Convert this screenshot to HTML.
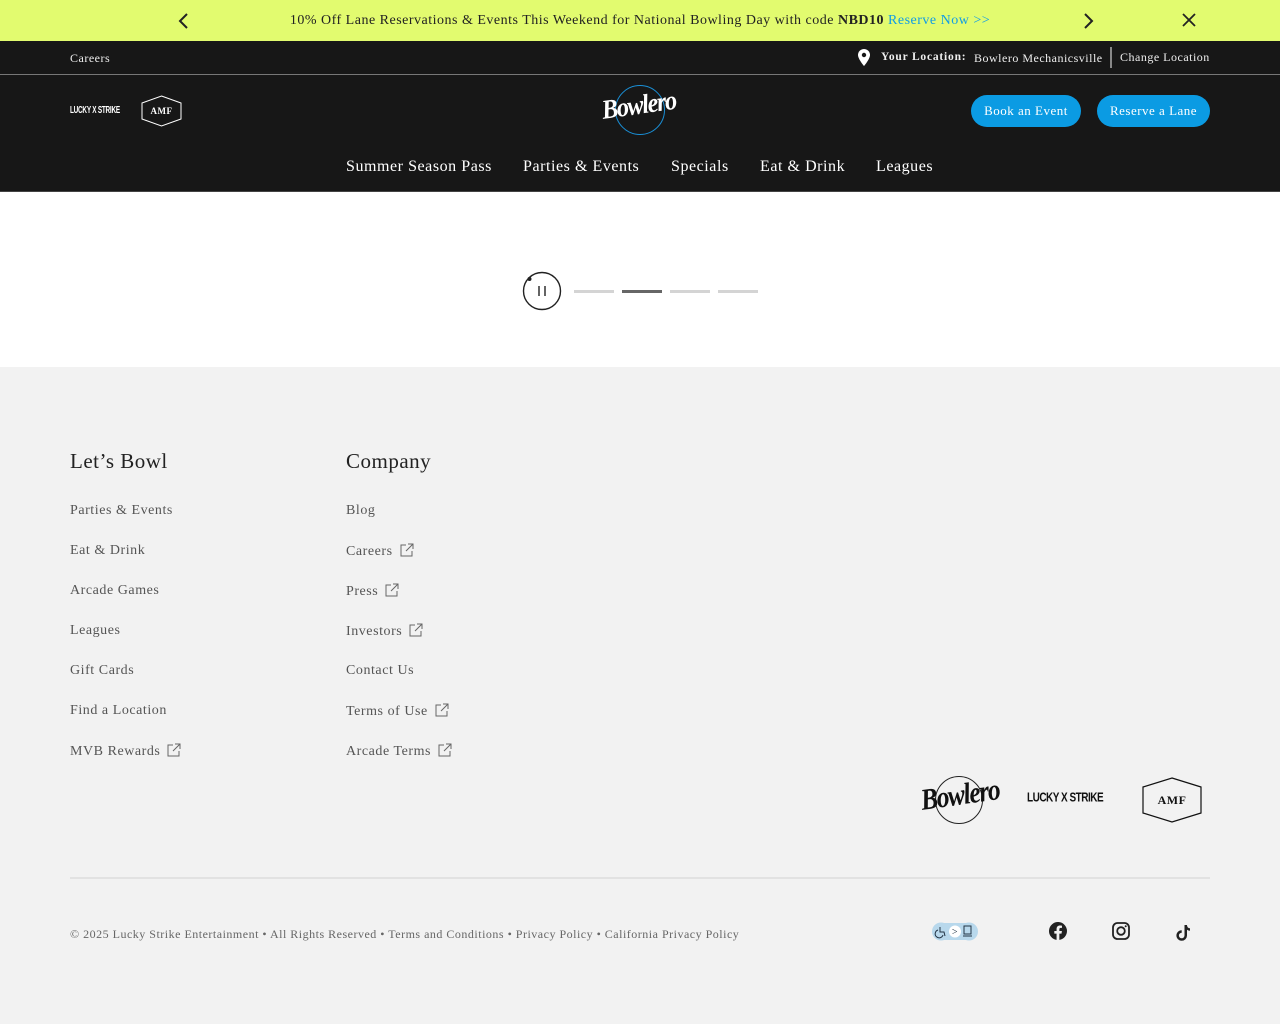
<!DOCTYPE html>
<html><head><meta charset="utf-8"><style>
*{margin:0;padding:0;box-sizing:border-box}
body{width:1280px;height:1024px;font-family:"Liberation Serif",serif;background:#f2f2f2;position:relative;overflow:hidden;letter-spacing:.5px}
.abs{position:absolute}
#promo{top:0;left:0;width:1280px;height:41px;background:#e2fb6f;font-size:14px;color:#222;text-align:center;line-height:41px;letter-spacing:.5px}
#promo a{color:#109ce6;text-decoration:none}
#top{top:41px;left:0;width:1280px;height:34px;background:#171717;border-bottom:1px solid #777;color:#eee;font-size:12px}
#hdr{top:75px;left:0;width:1280px;height:117px;background:#171717;border-bottom:1px solid #444}
.btn{position:absolute;top:20px;height:32px;border-radius:16px;background:#0b9be3;color:#fff;font-size:13px;line-height:32px;text-align:center}
.nav{position:absolute;top:83px;color:#fff;font-size:16px;letter-spacing:.55px}
#white{top:192px;left:0;width:1280px;height:175px;background:#fff}
.bar{position:absolute;top:290px;width:40px;height:3px;background:#d4d4d4}
h3{position:absolute;top:449px;font-weight:normal;font-size:21px;color:#222}
.lk{position:absolute;font-size:14px;color:#555;letter-spacing:.55px}
.ext{display:inline-block;width:14px;height:14px;margin-left:7px;vertical-align:-2px}
</style></head><body>
<div id="promo" class="abs">10% Off Lane Reservations &amp; Events This Weekend for National Bowling Day with code <b>NBD10</b> <a>Reserve Now &gt;&gt;</a></div>
<svg class="abs" style="left:177px;top:12px" width="14" height="18"><path d="M10 2L3 9l7 7" stroke="#222" stroke-width="2" fill="none"/></svg>
<svg class="abs" style="left:1081px;top:12px" width="14" height="18"><path d="M4 2l7 7-7 7" stroke="#222" stroke-width="2" fill="none"/></svg>
<svg class="abs" style="left:1181px;top:12px" width="16" height="16"><path d="M2 2l12 12M14 2L2 14" stroke="#222" stroke-width="1.8"/></svg>
<div id="top" class="abs">
<span class="abs" style="left:70px;top:10px">Careers</span>
<svg class="abs" style="left:857px;top:7px" width="14" height="19"><path d="M7 1a6 6 0 0 0-6 6c0 4 6 11 6 11s6-7 6-11a6 6 0 0 0-6-6z" fill="#fff"/><circle cx="7" cy="7" r="2.2" fill="#171717"/></svg>
<span class="abs" style="left:881px;top:10px;font-weight:bold;font-size:11.5px;letter-spacing:.8px">Your Location:</span>
<span class="abs" style="left:974px;top:10px">Bowlero Mechanicsville</span>
<div class="abs" style="left:1110px;top:6px;width:2px;height:21px;background:#888"></div>
<span class="abs" style="left:1120px;top:9px">Change Location</span>
</div>
<div id="hdr" class="abs">
<span class="abs" style="left:70px;top:30px;color:#fff;font-family:'Liberation Sans',sans-serif;font-weight:bold;font-size:8px;letter-spacing:-.3px;transform-origin:0 50%;transform:scale(.8,1.3)">LUCKY X STRIKE</span>
<svg class="abs" style="left:141px;top:20px" width="41" height="32"><path d="M20.5 1L40 8v16l-19.5 7L1 24V8z" fill="none" stroke="#fff" stroke-width="1"/><text x="20.5" y="19" font-family="Liberation Serif" font-size="9" font-weight="bold" fill="#fff" text-anchor="middle">AMF</text></svg>
<div class="abs" style="left:615px;top:10px;width:50px;height:50px;border:1.3px solid #1a8fd6;border-radius:50%"></div>
<span class="abs" style="left:602px;top:20px;color:#fff;font-style:italic;font-weight:bold;font-size:27px;font-family:'Liberation Serif',serif;letter-spacing:-1.5px;transform-origin:0 50%;transform:rotate(-8deg) scaleX(.9)">Bowlero</span>
<div class="btn" style="left:971px;width:110px">Book an Event</div>
<div class="btn" style="left:1097px;width:113px">Reserve a Lane</div>
<span class="nav" style="left:346px">Summer Season Pass</span>
<span class="nav" style="left:523px">Parties &amp; Events</span>
<span class="nav" style="left:671px">Specials</span>
<span class="nav" style="left:760px">Eat &amp; Drink</span>
<span class="nav" style="left:876px">Leagues</span>
</div>
<div id="white" class="abs"></div>
<svg class="abs" style="left:522px;top:271px" width="40" height="40"><circle cx="20" cy="20" r="18.5" fill="none" stroke="#222" stroke-width="1.4"/><circle cx="7.5" cy="8" r="2" fill="#222"/><path d="M17 15v10M23 15v10" stroke="#222" stroke-width="1.4"/></svg>
<div class="bar" style="left:574px"></div><div class="bar" style="left:622px;background:#666"></div><div class="bar" style="left:670px"></div><div class="bar" style="left:718px"></div>
<h3 style="left:70px">Let’s Bowl</h3><h3 style="left:346px">Company</h3>
<svg width="0" height="0" style="position:absolute"><defs><symbol id="e" viewBox="0 0 14 14"><path d="M6 2H1v11h11V8M8 1h5v5M13 1L6 8" stroke="#666" stroke-width="1" fill="none"/></symbol></defs></svg>
<div class="lk" style="left:70px;top:503px">Parties &amp; Events</div>
<div class="lk" style="left:70px;top:543px">Eat &amp; Drink</div>
<div class="lk" style="left:70px;top:583px">Arcade Games</div>
<div class="lk" style="left:70px;top:623px">Leagues</div>
<div class="lk" style="left:70px;top:663px">Gift Cards</div>
<div class="lk" style="left:70px;top:703px">Find a Location</div>
<div class="lk" style="left:70px;top:743px">MVB Rewards<svg class="ext"><use href="#e"/></svg></div>
<div class="lk" style="left:346px;top:503px">Blog</div>
<div class="lk" style="left:346px;top:543px">Careers<svg class="ext"><use href="#e"/></svg></div>
<div class="lk" style="left:346px;top:583px">Press<svg class="ext"><use href="#e"/></svg></div>
<div class="lk" style="left:346px;top:623px">Investors<svg class="ext"><use href="#e"/></svg></div>
<div class="lk" style="left:346px;top:663px">Contact Us</div>
<div class="lk" style="left:346px;top:703px">Terms of Use<svg class="ext"><use href="#e"/></svg></div>
<div class="lk" style="left:346px;top:743px">Arcade Terms<svg class="ext"><use href="#e"/></svg></div>
<div class="abs" style="left:935px;top:776px;width:48px;height:48px;border:1px solid #222;border-radius:50%"></div>
<span class="abs" style="left:921px;top:784px;color:#111;font-style:italic;font-weight:bold;font-size:30px;letter-spacing:-1.5px;transform-origin:0 50%;transform:rotate(-8deg) scaleX(.85)">Bowlero</span>
<span class="abs" style="left:1027px;top:793px;color:#111;font-family:'Liberation Sans',sans-serif;font-weight:bold;font-size:10px;letter-spacing:-.5px;transform-origin:0 50%;transform:scaleY(1.3)">LUCKY X STRIKE</span>
<svg class="abs" style="left:1142px;top:777px" width="60" height="46"><path d="M30 1L59 10v26L30 45 1 36V10z" fill="none" stroke="#111" stroke-width="1.2"/><text x="30" y="27" font-family="Liberation Serif" font-size="12" font-weight="bold" fill="#111" text-anchor="middle">AMF</text></svg>
<div class="abs" style="left:70px;top:877px;width:1140px;height:2px;background:#e2e2e2"></div>
<div class="abs" style="left:70px;top:927px;font-size:12px;color:#666;letter-spacing:.5px">© 2025 Lucky Strike Entertainment • All Rights Reserved • Terms and Conditions • Privacy Policy • California Privacy Policy</div>
<svg class="abs" style="left:931px;top:922px" width="48" height="20"><circle cx="10" cy="9.5" r="9" fill="#b8d8ec"/><circle cx="38" cy="9.5" r="9" fill="#b8d8ec"/><rect x="10" y="1" width="28" height="17" fill="#b8d8ec"/><circle cx="24" cy="9.5" r="6" fill="#fff"/><text x="24" y="13" font-size="10" text-anchor="middle" fill="#234">&gt;</text><path d="M9 5v5h4l1 4M7 8a4 4 0 1 0 5 5" stroke="#234" fill="none"/><rect x="33" y="4" width="7" height="8" fill="none" stroke="#234"/><path d="M32 14h9" stroke="#234"/></svg>
<svg class="abs" style="left:1049px;top:922px" width="18" height="18" viewBox="0 0 24 24"><path d="M24 12a12 12 0 1 0-13.9 11.9v-8.4H7.1V12h3V9.4c0-3 1.8-4.7 4.5-4.7 1.3 0 2.7.2 2.7.2v3h-1.5c-1.5 0-2 .9-2 1.9V12h3.4l-.5 3.5h-2.9v8.4A12 12 0 0 0 24 12z" fill="#222"/></svg>
<svg class="abs" style="left:1112px;top:922px" width="18" height="18"><rect x="1" y="1" width="16" height="16" rx="4.5" fill="none" stroke="#222" stroke-width="1.8"/><circle cx="9" cy="9" r="3.8" fill="none" stroke="#222" stroke-width="1.8"/><circle cx="13.7" cy="4.3" r="1" fill="#222"/></svg>
<svg class="abs" style="left:1176px;top:924px" width="16" height="17" viewBox="0 0 16 17"><path d="M8.5 1v10.5a2.8 2.8 0 1 1-2.8-2.8V6.2a5.3 5.3 0 1 0 5.3 5.3V5.8a5 5 0 0 0 3 1V4.3a3 3 0 0 1-3-3.3z" fill="#222"/></svg>
</body></html>
